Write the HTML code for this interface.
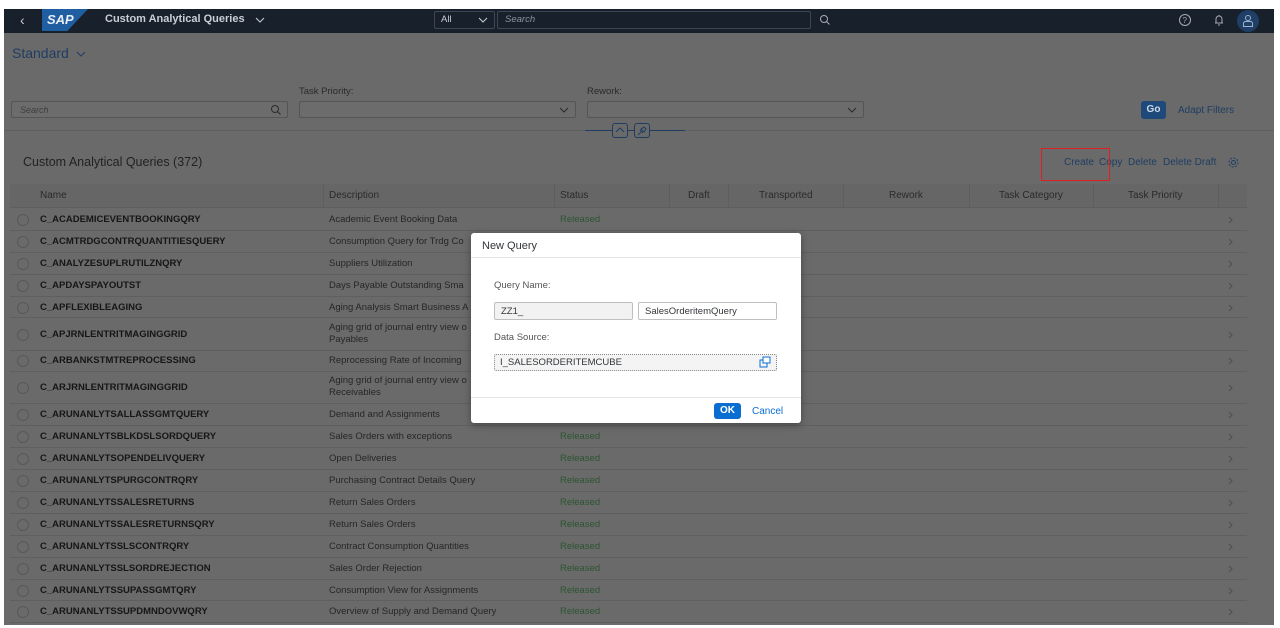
<!DOCTYPE html>
<html><head><meta charset="utf-8"><style>
*{box-sizing:border-box;margin:0;padding:0}
body{width:1280px;height:628px;background:#fff;font-family:"Liberation Sans",Arial,sans-serif;position:relative;overflow:hidden;font-size:10px;color:#2a2a2a}
.abs{position:absolute}
#shell{left:4px;top:9px;width:1270px;height:24px;background:#18202b}
#page{left:4px;top:33px;width:1270px;height:592px;background:#6a6a6a}
.t{position:absolute;white-space:nowrap}
.inp{position:absolute;border:1px solid #555;border-radius:2px;background:#6c6c6c;height:17px}
.row{position:absolute;left:10px;width:1237px;border-bottom:1px solid #5f5f5f;background:#6a6a6a}
.row .rad{position:absolute;left:7px;width:12px;height:12px;border:1px solid #585858;border-radius:50%}
.row .n{position:absolute;left:30px;font-weight:bold;color:#161616;font-size:9.5px}
.row .d{position:absolute;left:319px;color:#262626;font-size:9.5px;line-height:12px}
.row .s{position:absolute;left:550px;color:#2c5530;font-size:9.5px}
.row .c{position:absolute;left:1218px}
.h{position:absolute;top:190px;color:#2a2a2a;font-size:10px}
.vl{position:absolute;top:184px;height:23px;width:1px;background:#5e5e5e}
.lk{position:absolute;top:157px;color:#1f3d62;font-size:10px;white-space:nowrap}
</style></head><body>
<div id="shell" class="abs">
 <span class="t" style="left:16px;top:3px;color:#ccc;font-size:14px">&#8249;</span>
 <div class="abs" style="left:38px;top:0;width:46px;height:22px;background:#1f5ea0;clip-path:polygon(0 0,100% 0,55% 100%,0 100%)"></div>
 <span class="t" style="left:43px;top:3px;color:#e8eef5;font-weight:bold;font-size:13px;font-style:italic">SAP</span>
 <span class="t" style="left:101px;top:4px;color:#c9ced6;font-weight:bold;font-size:11px">Custom Analytical Queries</span>
 <svg class="abs" style="left:251px;top:7px" width="10" height="8"><path d="M1 2l4 4 4-4" stroke="#c9ced6" fill="none"/></svg>
 <div class="abs" style="left:430px;top:2px;width:61px;height:18px;border:1px solid #3c4654;border-radius:2px"></div>
 <span class="t" style="left:437px;top:5px;color:#c9ced6;font-size:9.5px">All</span>
 <svg class="abs" style="left:474px;top:7px" width="10" height="8"><path d="M1 2l4 4 4-4" stroke="#c9ced6" fill="none"/></svg>
 <div class="abs" style="left:493px;top:2px;width:314px;height:18px;border:1px solid #3c4654;border-radius:2px"></div>
 <span class="t" style="left:501px;top:5px;color:#8a93a0;font-size:9.5px;font-style:italic">Search</span>
 <svg class="abs" style="left:815px;top:5px" width="12" height="12"><circle cx="5" cy="5" r="3.5" fill="none" stroke="#aab" stroke-width="1"/><path d="M7.5 7.5L10.5 10.5" stroke="#aab"/></svg>
 <svg class="abs" style="left:1174px;top:4px" width="14" height="14"><circle cx="7" cy="7" r="5.5" fill="none" stroke="#aab"/><text x="4.5" y="10" font-size="8" fill="#aab" font-family="Liberation Sans">?</text></svg>
 <svg class="abs" style="left:1208px;top:4px" width="14" height="14"><path d="M3 10h8M4 10V6a3 3 0 016 0v4M6 12h2M7 2v1" stroke="#aab" fill="none"/></svg>
 <div class="abs" style="left:1233px;top:1px;width:22px;height:22px;border-radius:50%;background:#1f3f66"></div>
 <svg class="abs" style="left:1238px;top:5px" width="12" height="14"><circle cx="6" cy="4" r="2.5" fill="none" stroke="#9fb3cc"/><path d="M1.5 12.5v-3a2 2 0 012-2h5a2 2 0 012 2v3z" fill="none" stroke="#9fb3cc"/></svg>
</div>
<div id="page" class="abs"></div>
<span class="t" style="left:12px;top:45px;color:#1f3d62;font-size:14px">Standard</span>
<svg class="abs" style="left:76px;top:50px" width="10" height="8"><path d="M1 2l4 4 4-4" stroke="#1f3d62" fill="none"/></svg>
<span class="t" style="left:299px;top:86px;color:#2a2a2a;font-size:9.5px">Task Priority:</span>
<span class="t" style="left:587px;top:86px;color:#2a2a2a;font-size:9.5px">Rework:</span>
<div class="inp" style="left:11px;top:101px;width:277px"></div>
<span class="t" style="left:20px;top:105px;color:#3e3e3e;font-size:9px;font-style:italic">Search</span>
<svg class="abs" style="left:270px;top:104px" width="12" height="12"><circle cx="5" cy="5" r="3.5" fill="none" stroke="#2a2a2a"/><path d="M7.5 7.5L10.5 10.5" stroke="#2a2a2a"/></svg>
<div class="inp" style="left:299px;top:101px;width:277px"></div>
<svg class="abs" style="left:559px;top:106px" width="10" height="8"><path d="M1 2l4 4 4-4" stroke="#2a2a2a" fill="none"/></svg>
<div class="inp" style="left:587px;top:101px;width:277px"></div>
<svg class="abs" style="left:847px;top:106px" width="10" height="8"><path d="M1 2l4 4 4-4" stroke="#2a2a2a" fill="none"/></svg>
<div class="abs" style="left:1141px;top:101px;width:25px;height:18px;background:#1d4a7a;border-radius:3px;color:#cfdbea;font-size:10px;font-weight:bold;text-align:center;line-height:18px">Go</div>
<span class="t" style="left:1178px;top:105px;color:#1f3d62;font-size:10px">Adapt Filters</span>
<div class="abs" style="left:4px;top:130px;width:1270px;height:1px;background:#5f5f5f"></div>
<div class="abs" style="left:585px;top:130px;width:100px;height:1px;background:#1f3d62"></div>
<div class="abs" style="left:612px;top:123px;width:16px;height:15px;border:1px solid #1f3d62;border-radius:3px;background:#6a6a6a"></div>
<svg class="abs" style="left:615px;top:126px" width="10" height="8"><path d="M1 6l4-4 4 4" stroke="#1f3d62" fill="none"/></svg>
<div class="abs" style="left:634px;top:123px;width:16px;height:15px;border:1px solid #1f3d62;border-radius:3px;background:#6a6a6a"></div>
<svg class="abs" style="left:636px;top:125px" width="12" height="11"><path d="M2 10l3-3M4 5l3 3M5 4l3-2 2 2-2 3z" stroke="#1f3d62" fill="none"/></svg>
<span class="t" style="left:23px;top:155px;color:#222;font-size:12.5px">Custom Analytical Queries (372)</span>
<span class="lk" style="left:1064px">Create</span><span class="lk" style="left:1099px">Copy</span><span class="lk" style="left:1128px">Delete</span><span class="lk" style="left:1163px">Delete Draft</span>
<svg class="abs" style="left:1227px;top:156px" width="13" height="13"><circle cx="6.5" cy="6.5" r="2" fill="none" stroke="#1f3d62"/><circle cx="6.5" cy="6.5" r="4.5" fill="none" stroke="#1f3d62" stroke-dasharray="2 1.5"/></svg>
<div class="abs" style="left:1041px;top:148px;width:69px;height:33px;border:1.5px solid #e02020"></div>
<div class="abs" style="left:10px;top:184px;width:1237px;height:24px;background:#666;border-bottom:1px solid #5e5e5e"></div>
<div class="vl" style="left:323px"></div><div class="vl" style="left:554px"></div><div class="vl" style="left:669px"></div><div class="vl" style="left:728px"></div><div class="vl" style="left:843px"></div><div class="vl" style="left:969px"></div><div class="vl" style="left:1093px"></div><div class="vl" style="left:1218px"></div>
<span class="h" style="left:40px">Name</span><span class="h" style="left:329px">Description</span><span class="h" style="left:560px">Status</span><span class="h" style="left:688px">Draft</span><span class="h" style="left:759px">Transported</span><span class="h" style="left:889px">Rework</span><span class="h" style="left:999px">Task Category</span><span class="h" style="left:1128px">Task Priority</span>
<div id="rows"></div>
<script>
var r=[["C_ACADEMICEVENTBOOKINGQRY","Academic Event Booking Data",1,1],["C_ACMTRDGCONTRQUANTITIESQUERY","Consumption Query for Trdg Co",0,1],["C_ANALYZESUPLRUTILZNQRY","Suppliers Utilization",0,1],["C_APDAYSPAYOUTST","Days Payable Outstanding Sma",0,1],["C_APFLEXIBLEAGING","Aging Analysis Smart Business A",0,1],["C_APJRNLENTRITMAGINGGRID","Aging grid of journal entry view o<br>Payables",0,2],["C_ARBANKSTMTREPROCESSING","Reprocessing Rate of Incoming",0,1],["C_ARJRNLENTRITMAGINGGRID","Aging grid of journal entry view o<br>Receivables",0,2],["C_ARUNANLYTSALLASSGMTQUERY","Demand and Assignments",0,1],["C_ARUNANLYTSBLKDSLSORDQUERY","Sales Orders with exceptions",1,1],["C_ARUNANLYTSOPENDELIVQUERY","Open Deliveries",1,1],["C_ARUNANLYTSPURGCONTRQRY","Purchasing Contract Details Query",1,1],["C_ARUNANLYTSSALESRETURNS","Return Sales Orders",1,1],["C_ARUNANLYTSSALESRETURNSQRY","Return Sales Orders",1,1],["C_ARUNANLYTSSLSCONTRQRY","Contract Consumption Quantities",1,1],["C_ARUNANLYTSSLSORDREJECTION","Sales Order Rejection",1,1],["C_ARUNANLYTSSUPASSGMTQRY","Consumption View for Assignments",1,1],["C_ARUNANLYTSSUPDMNDOVWQRY","Overview of Supply and Demand Query",1,1]];
var y=209,h="";r.forEach(function(a){var H=a[3]==2?32:21.9,m=H/2;h+='<div class="row" style="top:'+y+'px;height:'+H+'px"><div class="rad" style="top:'+(m-6)+'px"></div><span class="n" style="top:'+(m-6)+'px">'+a[0]+'</span><span class="d" style="top:'+(a[3]==2?3:m-6)+'px">'+a[1]+'</span>'+(a[2]?'<span class="s" style="top:'+(m-6)+'px">Released</span>':'')+'<svg class="c" style="top:'+(m-4)+'px" width="6" height="8"><path d="M1 1l3 3-3 3" stroke="#4e4e4e" fill="none"/></svg></div>';y+=H;});
document.getElementById("rows").innerHTML=h;
</script>
<div class="abs" style="left:471px;top:233px;width:330px;height:190px;background:#fff;border-radius:3px;box-shadow:0 2px 8px rgba(0,0,0,.35)">
 <span class="t" style="left:11px;top:7px;color:#32363a;font-size:11px">New Query</span>
 <div class="abs" style="left:0;top:24px;width:330px;height:1px;background:#e5e5e5"></div>
 <span class="t" style="left:23px;top:47px;color:#555;font-size:9.5px">Query Name:</span>
 <div class="abs" style="left:23px;top:69px;width:139px;height:18px;border:1px solid #bfbfbf;border-radius:2px;background:#f2f2f2"></div>
 <span class="t" style="left:30px;top:73px;color:#32363a;font-size:9.5px">ZZ1_</span>
 <div class="abs" style="left:167px;top:69px;width:139px;height:18px;border:1px solid #bfbfbf;border-radius:2px"></div>
 <span class="t" style="left:174px;top:73px;color:#32363a;font-size:9.5px">SalesOrderitemQuery</span>
 <span class="t" style="left:23px;top:99px;color:#555;font-size:9.5px">Data Source:</span>
 <div class="abs" style="left:23px;top:121px;width:283px;height:17px;border:1px dotted #888;border-radius:2px;background:#f4f4f4"></div>
 <span class="t" style="left:29px;top:124px;color:#32363a;font-size:9.5px">I_SALESORDERITEMCUBE</span>
 <svg class="abs" style="left:288px;top:123px" width="12" height="12"><rect x="1" y="4" width="7" height="7" fill="none" stroke="#0a6ed1"/><rect x="4" y="1" width="7" height="6" fill="#fff" stroke="#0a6ed1"/></svg>
 <div class="abs" style="left:0;top:164px;width:330px;height:1px;background:#e5e5e5"></div>
 <div class="abs" style="left:243px;top:170px;width:27px;height:16px;background:#0a6ed1;border-radius:3px;color:#fff;font-weight:bold;font-size:10px;text-align:center;line-height:16px">OK</div>
 <span class="t" style="left:281px;top:173px;color:#0a6ed1;font-size:10px">Cancel</span>
</div>
</body></html>
